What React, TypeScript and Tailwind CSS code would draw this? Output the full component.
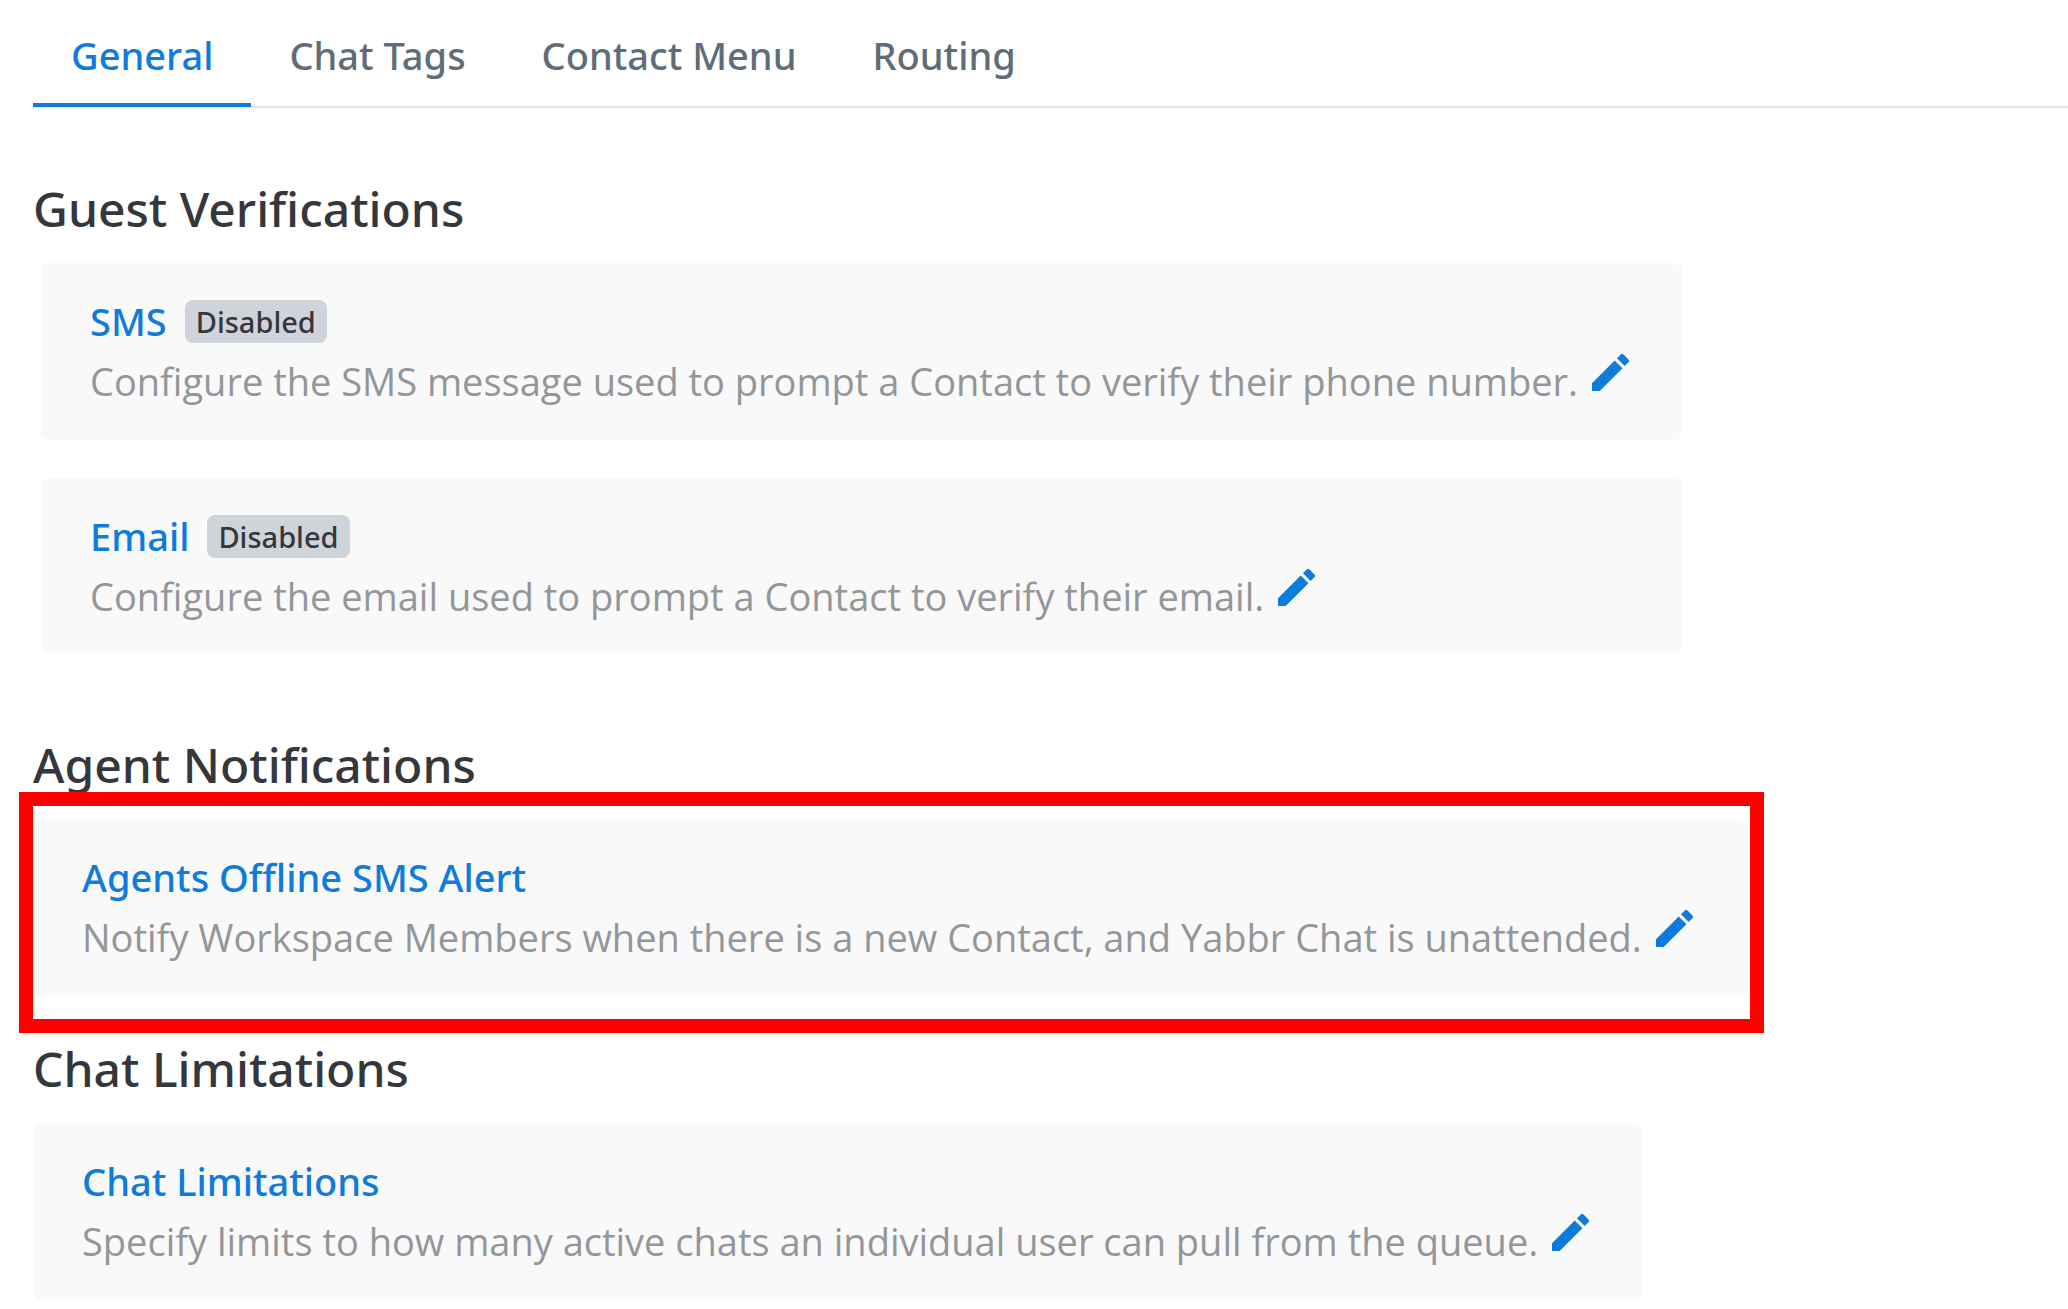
import { useState, type ReactNode } from "react";

const tabs = ["General", "Chat Tags", "Contact Menu", "Routing"];

function PencilIcon() {
  return (
    <svg viewBox="3 3 18 18" className="size-[37px] fill-current" aria-hidden="true">
      <path d="M3 17.25V21h3.75L17.81 9.94l-3.75-3.75L3 17.25zM20.71 7.04a1 1 0 0 0 0-1.41l-2.34-2.34a1 1 0 0 0-1.41 0l-1.83 1.83 3.75 3.75 1.83-1.83z" />
    </svg>
  );
}

type CardProps = {
  title: string;
  description: string;
  status?: string;
  highlighted?: boolean;
};

function SettingCard({ title, description, status, highlighted }: CardProps) {
  return (
    <article className="relative rounded-lg bg-[#f9f9f9] pt-7 pr-[53px] pb-[29px] pl-[49px]">
      <div className="flex items-center gap-[18px]">
        <h3 className="font-['Noto_Sans','Open_Sans',sans-serif] text-[38px] leading-[60px] font-medium text-[#0f7bdb]">
          <a href="#">{title}</a>
        </h3>
        {status && (
          <span className="rounded-lg bg-[#ced4da] px-[11px] font-['Noto_Sans','Open_Sans',sans-serif] text-[29px] leading-[43px] font-medium text-[#36373a]">
            {status}
          </span>
        )}
      </div>
      <div className="flex items-start gap-[14px]">
        <p className="text-[38px] leading-[60px] text-[#949699]">{description}</p>
        <button
          type="button"
          aria-label={`Edit ${title}`}
          className="mt-[3px] shrink-0 cursor-pointer text-[#0f7bdb]"
        >
          <PencilIcon />
        </button>
      </div>
      {highlighted && (
        <div className="pointer-events-none absolute -top-[27px] -right-[18px] -bottom-[37px] -left-3.5 border-14 border-[#ff0000]" />
      )}
    </article>
  );
}

function Section({ title, children }: { title: string; children: ReactNode }) {
  return (
    <section className="w-fit">
      <h2 className="mb-[22px] font-['Noto_Sans','Open_Sans',sans-serif] text-[48px] leading-16 font-medium text-[#36373a]">
        {title}
      </h2>
      {children}
    </section>
  );
}

export default function App() {
  const [active, setActive] = useState("General");

  return (
    <main className="min-h-screen bg-white pb-2 pl-[33px] font-['Open_Sans',sans-serif]">
      <div role="tablist" className="flex border-b-2 border-[#e3e7eb]">
        {tabs.map((tab) => (
          <button
            key={tab}
            type="button"
            role="tab"
            aria-selected={tab === active}
            onClick={() => setActive(tab)}
            className={`-mb-px cursor-pointer border-b-4 px-[38px] pt-[25px] pb-[18px] font-['Noto_Sans','Open_Sans',sans-serif] text-[38px] leading-[60px] font-medium ${
              tab === active
                ? "border-[#0f7bdb] text-[#0f7bdb]"
                : "border-transparent text-[#5f6d78]"
            }`}
          >
            {tab}
          </button>
        ))}
      </div>

      <div className="pt-[69px]">
        <Section title="Guest Verifications">
          <div className="ml-2 flex flex-col gap-[38px]">
            <SettingCard
              title="SMS"
              status="Disabled"
              description="Configure the SMS message used to prompt a Contact to verify their phone number."
            />
            <SettingCard
              title="Email"
              status="Disabled"
              description="Configure the email used to prompt a Contact to verify their email."
            />
          </div>
        </Section>

        <div className="pt-[78px]">
          <Section title="Agent Notifications">
            <SettingCard
              highlighted
              title="Agents Offline SMS Alert"
              description="Notify Workspace Members when there is a new Contact, and Yabbr Chat is unattended."
            />
          </Section>
        </div>

        <div className="pt-[41px]">
          <Section title="Chat Limitations">
            <SettingCard
              title="Chat Limitations"
              description="Specify limits to how many active chats an individual user can pull from the queue."
            />
          </Section>
        </div>
      </div>
    </main>
  );
}
